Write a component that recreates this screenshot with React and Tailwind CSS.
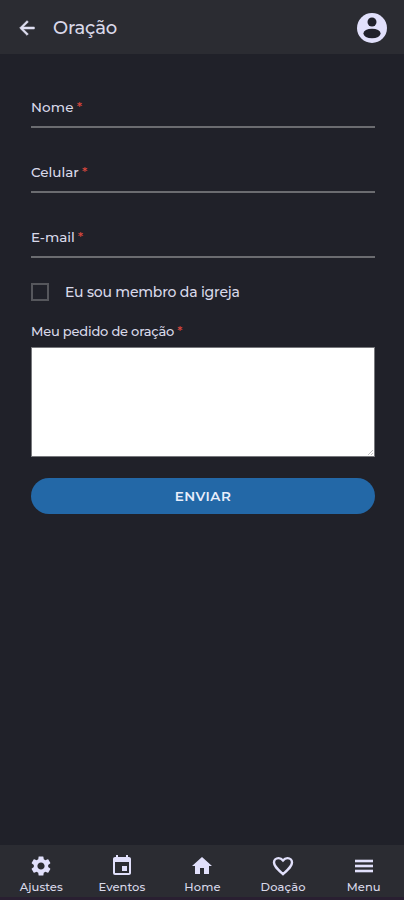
import { MdSettings, MdEvent, MdHome } from "react-icons/md";

function BackIcon() {
  return (
    <svg width="22" height="22" viewBox="0 0 24 24" aria-hidden="true">
      <path
        d="M20 11H7.83l5.59-5.59L12 4l-8 8 8 8 1.41-1.41L7.83 13H20v-2z"
        fill="#e0e0f2"
        stroke="#e0e0f2"
        strokeWidth="0.7"
      />
    </svg>
  );
}

function AccountIcon() {
  return (
    <svg width="30" height="30" viewBox="0 0 30 30" aria-hidden="true">
      <circle cx="15" cy="15" r="15" fill="#e1e0fb" />
      <circle cx="15" cy="9" r="4.5" fill="#20212b" />
      <ellipse cx="15" cy="20.5" rx="8.6" ry="4.8" fill="#20212b" />
    </svg>
  );
}

function HeartIcon({ className }) {
  return (
    <svg width="24" height="24" viewBox="0 0 24 24" className={className} aria-hidden="true">
      <path
        d="M12 20.1l-1.1-1C6 14.7 3 12 3 8.5 3 6 5 4.1 7.5 4.1c1.74 0 3.41.9 4.5 2.3 1.09-1.4 2.76-2.3 4.5-2.3C19 4.1 21 6 21 8.5c0 3.5-3 6.2-7.9 10.6z"
        fill="none"
        stroke="currentColor"
        strokeWidth="2.4"
      />
    </svg>
  );
}

function MenuIcon({ className }) {
  return (
    <svg width="24" height="24" viewBox="0 0 24 24" fill="currentColor" className={className} aria-hidden="true">
      <rect x="3" y="5.7" width="18" height="2.6" />
      <rect x="3" y="10.7" width="18" height="2.6" />
      <rect x="3" y="15.7" width="18" height="2.6" />
    </svg>
  );
}

function Label({ children, className = "" }) {
  return (
    <span className={`block whitespace-nowrap leading-4 font-medium ${className}`}>
      {children}
      <span className="ml-[3px] tracking-normal text-[#d8463d]">*</span>
    </span>
  );
}

function Field({ label, spacing }) {
  return (
    <div className="h-[65px] pt-[10px]">
      <Label className={`text-[13.5px] ${spacing}`}>{label}</Label>
      <div className="mt-[11px] h-[2px] bg-[#6b6c70]" />
    </div>
  );
}

const tabs = [
  { label: "Ajustes", Icon: MdSettings, spacing: "tracking-[0.05px]" },
  { label: "Eventos", Icon: MdEvent, spacing: "tracking-[0.05px]" },
  { label: "Home", Icon: MdHome, spacing: "tracking-[0.2px]" },
  { label: "Doação", Icon: HeartIcon, spacing: "tracking-[0.1px]" },
  { label: "Menu", Icon: MenuIcon, spacing: "tracking-[0px]" },
];

export default function App() {
  return (
    <div className="flex h-[900px] w-[404px] flex-col overflow-hidden bg-[#202129] font-['Montserrat','Inter',sans-serif] text-[#d9d9e9]">
      <header className="flex h-[54px] shrink-0 items-center bg-[#2b2c32] pr-[17px] pl-[16px] pt-[1px]">
        <BackIcon />
        <h1 className="ml-[15px] flex-1 text-[18px] leading-6 font-medium tracking-[-0.15px]">Oração</h1>
        <AccountIcon />
      </header>

      <main className="flex flex-1 flex-col pr-[29px] pl-[31px] pt-[35px]">
        <Field label="Nome" spacing="tracking-[0.15px]" />
        <Field label="Celular" spacing="tracking-[0px]" />
        <Field label="E-mail" spacing="tracking-[0px]" />
        <div className="-mt-px flex h-[18px] items-center">
          <span className="h-[18px] w-[18px] border-2 border-[#56575c]" />
          <span className="ml-[16px] whitespace-nowrap text-[14px] leading-[18px] font-medium tracking-[-0.2px]">
            Eu sou membro da igreja
          </span>
        </div>
        <Label className="mt-[22px] text-[13px] tracking-[-0.2px]">Meu pedido de oração</Label>
        <div className="relative mt-[8px] h-[110px] shrink-0">
          <textarea className="block h-full w-full resize-none border border-[#77787c] bg-white outline-none" />
          <svg width="5" height="5" viewBox="0 0 5 5" className="absolute right-[2px] bottom-[2px]" aria-hidden="true">
            <path d="M0 5L5 0M3 5L5 3" stroke="#aaaaae" strokeWidth="0.7" />
          </svg>
        </div>
        <button className="mt-[21px] h-[36px] w-full shrink-0 rounded-full bg-[#2368a7] text-[13.5px] font-semibold tracking-[0.5px] text-[#e9eefb]">
          ENVIAR
        </button>
      </main>

      <nav className="grid h-[55px] shrink-0 grid-cols-5 border-b-[3px] border-[#291f31] bg-[#2b2c32] pl-px">
        {tabs.map(({ label, Icon, spacing }) => (
          <div key={label} className="flex flex-col items-center pt-[9px]">
            <Icon size={24} className="text-[#e1e0fb]" />
            <span className={`mt-[2px] text-[11.5px] leading-[14px] font-medium ${spacing}`}>{label}</span>
          </div>
        ))}
      </nav>
    </div>
  );
}
